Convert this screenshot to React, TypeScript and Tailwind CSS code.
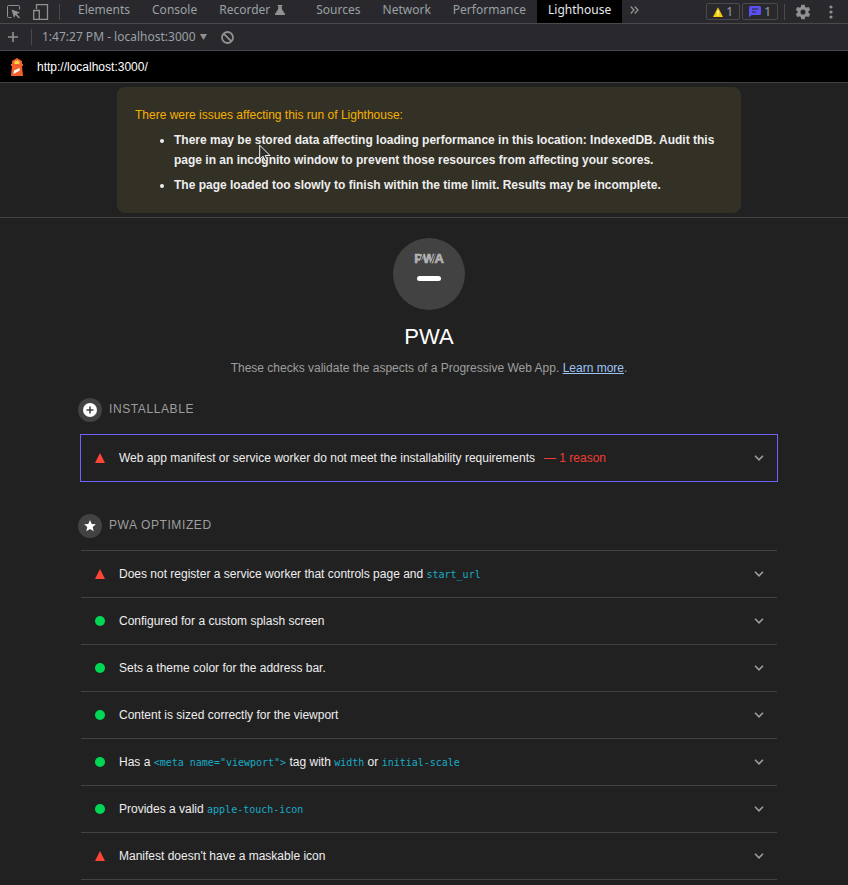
import type { ReactNode } from "react";

type Status = "pass" | "fail";

type Audit = {
  id: string;
  status: Status;
  title: ReactNode;
};

const tabClass = "h-full px-[11px] text-[#9aa0a6] whitespace-nowrap";
const badgeClass =
  "flex h-[17px] items-center gap-[3px] rounded-xs border border-[#4a4a4d] px-1.5 text-[#9aa0a6]";

const Code = ({ children }: { children: ReactNode }) => (
  <code className="font-['DejaVu_Sans_Mono',monospace] text-[10px] text-[#18abc6]">{children}</code>
);

const audits: Audit[] = [
  {
    id: "service-worker",
    status: "fail",
    title: <>Does not register a service worker that controls page and <Code>start_url</Code></>,
  },
  { id: "splash-screen", status: "pass", title: "Configured for a custom splash screen" },
  { id: "themed-omnibox", status: "pass", title: "Sets a theme color for the address bar." },
  { id: "content-width", status: "pass", title: "Content is sized correctly for the viewport" },
  {
    id: "viewport",
    status: "pass",
    title: (
      <>
        Has a <Code>{'<meta name="viewport">'}</Code> tag with <Code>width</Code> or <Code>initial-scale</Code>
      </>
    ),
  },
  { id: "apple-touch-icon", status: "pass", title: <>Provides a valid <Code>apple-touch-icon</Code></> },
  { id: "maskable-icon", status: "fail", title: "Manifest doesn't have a maskable icon" },
];

function StatusIcon({ status }: { status: Status }) {
  return (
    <svg width="10" height="10" viewBox="0 0 10 10" className="shrink-0" aria-hidden="true">
      {status === "fail" ?
        <path d="M5 0l5 10H0z" fill="#ff4438" />
      : <circle cx="5" cy="5" r="5" fill="#00d755" />}
    </svg>
  );
}

function Chevron() {
  return (
    <svg width="10" height="6" viewBox="0 0 10 6" className="shrink-0" aria-hidden="true">
      <path d="M1 .800l4 4 4-4" fill="none" stroke="#9e9e9e" strokeWidth="1.600" />
    </svg>
  );
}

function AuditRow({ status, children }: { status: Status; children: ReactNode }) {
  return (
    <button type="button" className="flex h-[46px] w-full items-center pr-[13px] pl-3.5 text-left">
      <StatusIcon status={status} />
      <span className="ml-3.5 flex-1">{children}</span>
      <Chevron />
    </button>
  );
}

function GroupHeader({ icon, children }: { icon: ReactNode; children: ReactNode }) {
  return (
    <div className="-ml-[3px] mb-3 flex h-6 items-center gap-[7px]">
      <svg width="24" height="24" viewBox="0 0 24 24" aria-hidden="true">
        <circle cx="12" cy="12" r="12" fill="#424242" />
        {icon}
      </svg>
      <h2 className="pb-0.5 tracking-wider text-[#9e9e9e] uppercase">{children}</h2>
    </div>
  );
}

function TabBar() {
  return (
    <nav className="flex h-6 items-center border-b border-[#4a4a4d] bg-[#29292d]">
      <button type="button" aria-label="Inspect element" className="ml-[7px]">
        <svg width="14" height="14" viewBox="0 0 14 14" fill="none" stroke="#919191">
          <path d="M12.500 4.500V1.500a1 1 0 0 0-1-1h-10a1 1 0 0 0-1 1v10a1 1 0 0 0 1 1h3" />
          <path d="M4.500 4.500l8.500 3-3.200 1.500 3.200 3.600-1.200 1-3.300-3.500-1.500 3z" fill="#919191" stroke="none" />
        </svg>
      </button>
      <button type="button" aria-label="Toggle device toolbar" className="ml-3">
        <svg width="16" height="16" viewBox="0 0 16 16" fill="none" stroke="#919191">
          <path d="M3.500 5V.700h11v14.800H7" strokeWidth="1.300" />
          <path d="M.700 6.500h5.600v9H.700z" strokeWidth="1.300" />
        </svg>
      </button>
      <span className="mr-[7px] ml-2.5 h-4 w-px bg-[#4a4a4d]" />
      <div className="flex h-full flex-1 items-center pb-1">
        <button type="button" className={tabClass}>Elements</button>
        <button type="button" className={tabClass}>Console</button>
        <button type="button" className="flex h-full items-center gap-[5px] pr-5 pl-[11px] whitespace-nowrap text-[#9aa0a6]">
          Recorder
          <svg width="10" height="10" viewBox="0 0 10 10" fill="#919191" aria-hidden="true">
            <path d="M2.500 0h5v1H6.800v3L10 9v1H0V9l3.200-5V1h-.700z" />
          </svg>
        </button>
        <button type="button" className={tabClass}>Sources</button>
        <button type="button" className={tabClass}>Network</button>
        <button type="button" className={tabClass}>Performance</button>
        <button type="button" className="-mb-1 h-[23px] bg-black px-[11px] pb-1 whitespace-nowrap text-[#e8eaed]">
          Lighthouse
        </button>
        <button type="button" aria-label="More tabs" className="ml-2">
          <svg width="9" height="8" viewBox="0 0 9 8" fill="none" stroke="#919191" strokeWidth="1.300">
            <path d="M.700.500L4 4 .700 7.500M4.700.500L8 4 4.700 7.500" />
          </svg>
        </button>
      </div>
      <button type="button" aria-label="1 warning" className={`mr-0.5 ${badgeClass}`}>
        <svg width="10" height="10" viewBox="0 0 10 10" aria-hidden="true">
          <path d="M5 .300L10 10H0z" fill="#f2cb05" />
          <path d="M5 3.500v3.200M5 7.600v1.200" stroke="#fff" strokeWidth="1.200" />
        </svg>
        1
      </button>
      <button type="button" aria-label="1 issue" className={badgeClass}>
        <svg width="12" height="12" viewBox="0 0 12 12" aria-hidden="true">
          <path d="M1.500 0h9A1.500 1.500 0 0 1 12 1.500v6A1.500 1.500 0 0 1 10.500 9H2.500L0 11.500v-10A1.500 1.500 0 0 1 1.500 0z" fill="#5a4ff3" />
          <path d="M3 3h6M3 6h4" stroke="#29292d" />
        </svg>
        1
      </button>
      <span className="ml-1.5 h-4 w-px bg-[#4a4a4d]" />
      <button type="button" aria-label="Settings" className="ml-2.5">
        <svg width="16" height="16" viewBox="1 1 22 22" fill="#919191">
          <path d="M19.430 12.980c.040-.320.070-.640.070-.980s-.030-.660-.070-.980l2.110-1.650c.190-.150.240-.420.120-.640l-2-3.460c-.120-.220-.390-.300-.610-.220l-2.490 1c-.520-.400-1.080-.730-1.690-.980l-.380-2.650A.488.488 0 0 0 14 2h-4c-.250 0-.460.180-.490.420l-.380 2.650c-.610.250-1.170.590-1.690.980l-2.490-1c-.230-.090-.490 0-.610.220l-2 3.460c-.130.220-.070.490.120.640l2.110 1.650c-.040.320-.070.650-.070.980s.030.660.070.980l-2.110 1.650c-.190.150-.240.420-.120.640l2 3.460c.120.220.390.300.610.220l2.490-1c.520.400 1.080.730 1.690.980l.380 2.650c.030.240.240.420.490.420h4c.250 0 .460-.180.490-.420l.380-2.650c.610-.250 1.170-.590 1.690-.980l2.490 1c.230.090.490 0 .610-.220l2-3.460c.120-.220.070-.490-.120-.640zM12 15.500a3.500 3.500 0 1 1 0-7 3.500 3.500 0 0 1 0 7z" />
        </svg>
      </button>
      <button type="button" aria-label="Customize" className="mr-[15px] ml-[18px]">
        <svg width="4" height="14" viewBox="0 0 4 14" fill="#919191">
          <circle cx="2" cy="2" r="1.600" />
          <circle cx="2" cy="7" r="1.600" />
          <circle cx="2" cy="12" r="1.600" />
        </svg>
      </button>
    </nav>
  );
}

function ReportToolbar() {
  return (
    <div className="flex h-[27px] items-center border-b border-[#4a4a4d] bg-[#29292d] text-[#9aa0a6]">
      <button type="button" aria-label="New report" className="ml-2">
        <svg width="10" height="10" viewBox="0 0 10 10" stroke="#919191" strokeWidth="1.600">
          <path d="M5 0v10M0 5h10" />
        </svg>
      </button>
      <span className="mr-2.5 ml-[13px] h-4 w-px bg-[#4a4a4d]" />
      <button type="button" className="flex items-center gap-1">
        1:47:27 PM - localhost:3000
        <svg width="7" height="6" viewBox="0 0 7 6" fill="#919191" aria-hidden="true">
          <path d="M0 0h7L3.500 6z" />
        </svg>
      </button>
      <button type="button" aria-label="Clear all" className="ml-3.5">
        <svg width="13" height="13" viewBox="0 0 13 13" fill="none" stroke="#919191" strokeWidth="1.800">
          <circle cx="6.500" cy="6.500" r="5.500" />
          <path d="M2.600 2.600l7.800 7.800" />
        </svg>
      </button>
    </div>
  );
}

function LighthouseLogo() {
  return (
    <svg width="14" height="18" viewBox="0 0 14 18" aria-hidden="true">
      <path d="M7 0l5 3v3h1v2h-1l1 10H1L2 8H1V6h1V3z" fill="#f4602b" />
      <path d="M4.500 6V4.500a2.500 2 0 0 1 5 0V6z" fill="#f9d949" />
      <path d="M4 12.500l5.500-2.500.300 2.500L3.500 16z" fill="#fff" />
    </svg>
  );
}

function PwaGauge() {
  return (
    <svg width="72" height="72" viewBox="0 0 72 72" aria-hidden="true">
      <circle cx="36" cy="36" r="36" fill="#424242" />
      <text
        x="36"
        y="25"
        textAnchor="middle"
        fill="#b3b3b3"
        stroke="#b3b3b3"
        strokeWidth=".6"
        className="font-['Liberation_Sans',Arial,sans-serif] text-[13px] font-bold"
      >
        PWA
      </text>
      {/* slanted cuts through the W and the A */}
      <path d="M26.500 25.500l4-11M38 25.500l4.500-11" stroke="#424242" />
      <rect x="24" y="38" width="24" height="5" rx="2.500" fill="#fff" />
    </svg>
  );
}

export default function App() {
  return (
    <div className="min-h-screen bg-[#212121] font-['Noto_Sans',sans-serif] text-xs">
      <TabBar />
      <ReportToolbar />
      <div className="font-['Liberation_Sans',Arial,sans-serif] text-[#eeeeee]">
        <div className="flex h-8 items-center gap-[13px] border-b border-[#424242] bg-black pl-2.5">
          <LighthouseLogo />
          <a href="http://localhost:3000/" className="text-white">http://localhost:3000/</a>
        </div>

        <div className="border-b border-[#424242] py-1 pl-2.5">
          <div className="relative mx-auto max-w-[624px] rounded-lg bg-[#333026] p-[18px] leading-5">
            <p className="text-[#f5b000]">There were issues affecting this run of Lighthouse:</p>
            <ul className="list-disc pl-[39px] font-bold">
              <li className="mt-[5px]">
                There may be stored data affecting loading performance in this location: IndexedDB. Audit this page in
                an incognito window to prevent those resources from affecting your scores.
              </li>
              <li className="mt-[5px]">
                The page loaded too slowly to finish within the time limit. Results may be incomplete.
              </li>
            </ul>
            <svg
              width="12"
              height="18"
              viewBox="0 0 12 18"
              className="absolute top-[57px] left-[142px]"
              aria-hidden="true"
            >
              <path
                d="M.700 1.200v14l3.300-3 2.200 4.800 2.200-1-2.200-4.500h4.800z"
                fill="#2b2b2b"
                stroke="#f5f5f5"
              />
            </svg>
          </div>
        </div>

        <main className="pl-2.5">
          <div className="mx-auto max-w-[696px] pt-5">
            <div className="flex flex-col items-center text-center">
              <PwaGauge />
              <h1 className="mt-3 text-[22px] leading-[30px] text-white">PWA</h1>
              <p className="mt-1.5 leading-5 text-[#9e9e9e]">
                These checks validate the aspects of a Progressive Web App.{" "}
                <a href="https://developers.google.com/web/progressive-web-apps" className="text-[#9fc3f5] underline">
                  Learn more
                </a>
                .
              </p>
            </div>

            <section className="mt-5">
              <GroupHeader
                icon={
                  <>
                    <circle cx="12" cy="12" r="7" fill="#fff" />
                    <path d="M12 8.500v7M8.500 12h7" stroke="#424242" strokeWidth="1.600" />
                  </>
                }
              >
                Installable
              </GroupHeader>
              <div className="-mx-px border border-[#6c63ff]">
                <AuditRow status="fail">
                  Web app manifest or service worker do not meet the installability requirements
                  <span className="ml-[9px] text-[#f03e36]">— 1 reason</span>
                </AuditRow>
              </div>
            </section>

            <section className="mt-8">
              <GroupHeader icon={<path d="M12 6l1.700 4 4.200.300-3.200 2.800 1 4.200L12 15.100l-3.700 2.200 1-4.200-3.200-2.800 4.200-.300z" fill="#fff" />}>
                PWA Optimized
              </GroupHeader>
              <ul className="border-b border-[#424242]">
                {audits.map((audit) => (
                  <li key={audit.id} className="border-t border-[#424242]">
                    <AuditRow status={audit.status}>{audit.title}</AuditRow>
                  </li>
                ))}
              </ul>
            </section>
          </div>
        </main>
      </div>
    </div>
  );
}
